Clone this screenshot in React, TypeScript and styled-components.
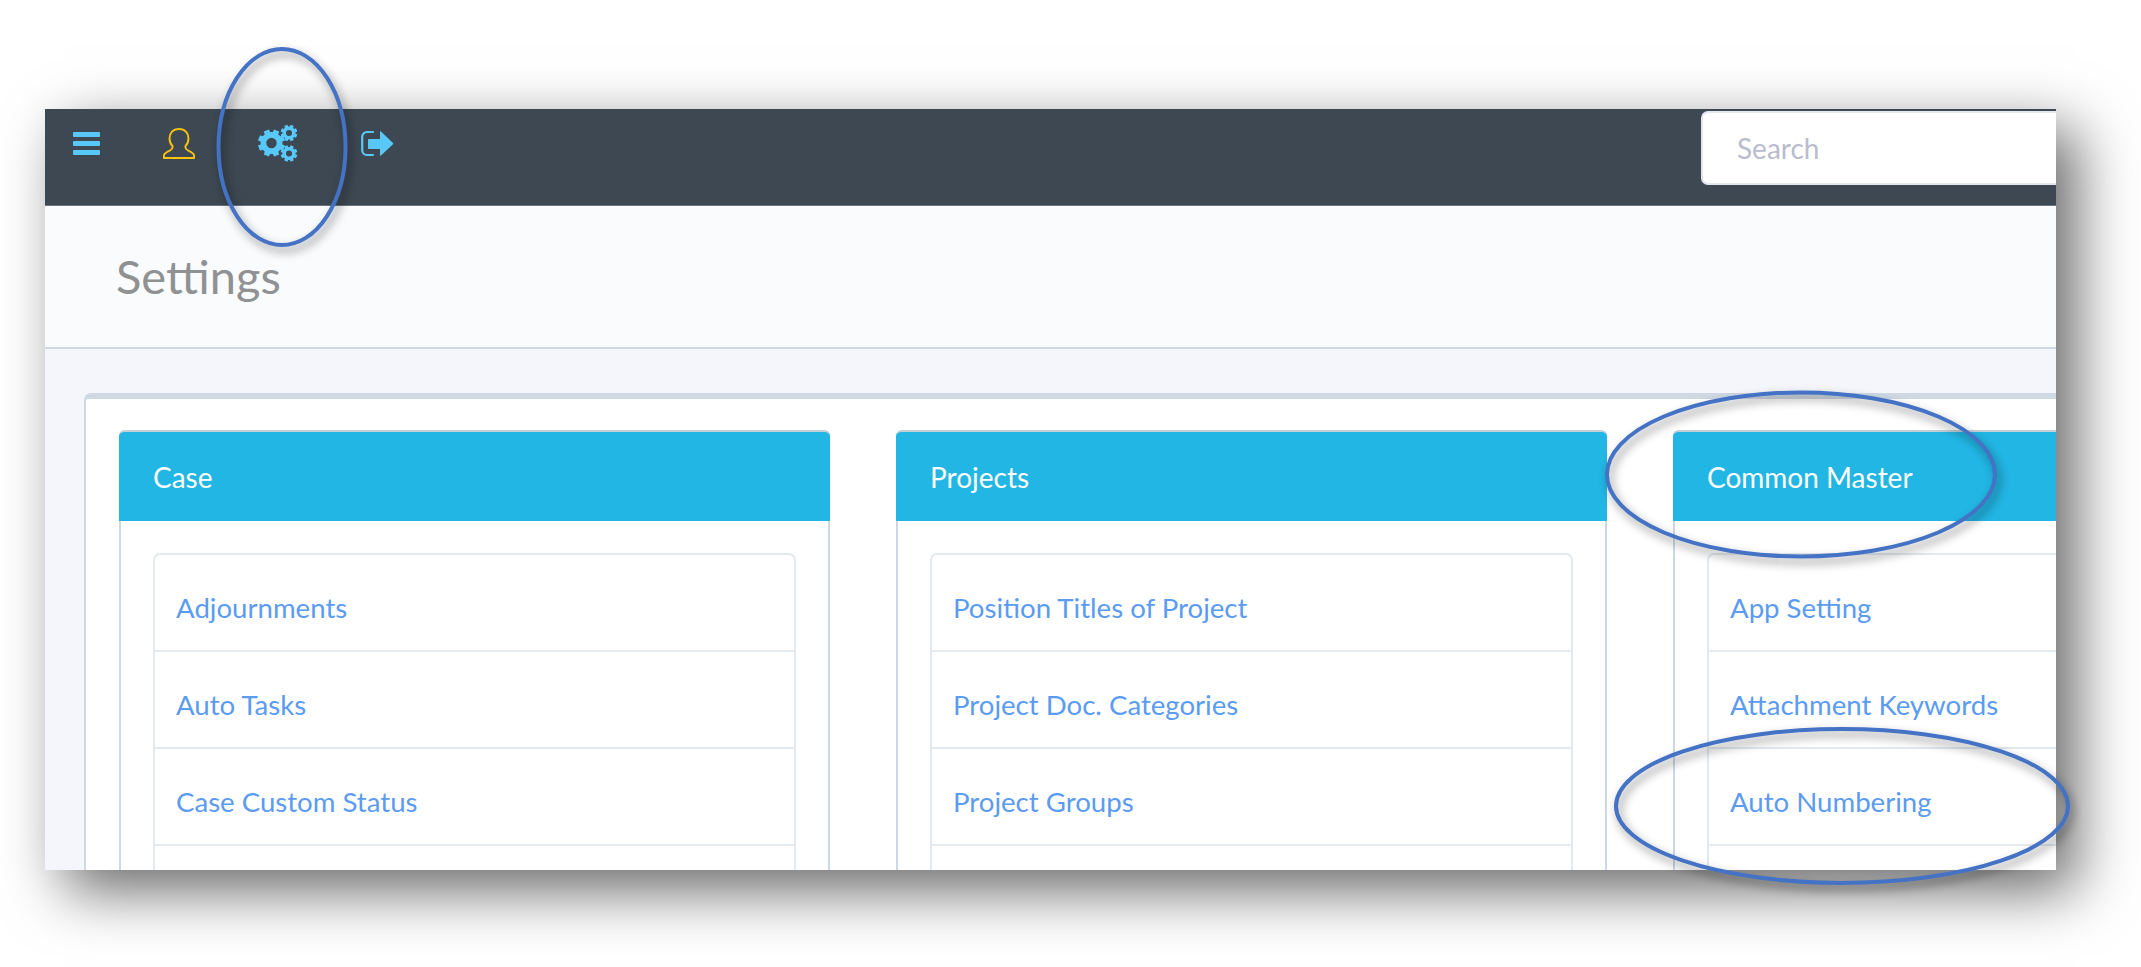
import React from "react";
import styled, { createGlobalStyle } from "styled-components";

const Global = createGlobalStyle`
  html, body { margin: 0; padding: 0; background: #fff; }
  body { font-family: "Lato", "Open Sans", sans-serif; width: 2141px; height: 967px; overflow: hidden; }
`;

const Stage = styled.div`
  position: relative;
  width: 2141px;
  height: 967px;
  padding: 109px 85px 97px 45px;
  box-sizing: border-box;
`;

const Window = styled.div`
  height: 761px;
  overflow: hidden;
  background: #f4f6fb;
  box-shadow: 20px 20px 56px rgba(0, 0, 0, 0.6);
`;

const TopBar = styled.header`
  display: flex;
  height: 96px;
  background: #3d4852;
  border-bottom: 1px solid #6b747c;
  box-sizing: content-box;
`;

const Nav = styled.nav`
  flex: 0 0 1656px;
  display: flex;
  align-items: center;
  gap: 63px;
  height: 68px;
  padding-left: 28px;
  box-sizing: border-box;
  color: #58c8f8;
`;

const NavIcon = styled.span`
  display: flex;
  align-items: center;
  justify-content: center;
  line-height: 0;
`;

const SearchInput = styled.input`
  flex: 0 0 420px;
  height: 74px;
  margin-top: 2px;
  padding: 0 0 0 34px;
  box-sizing: border-box;
  border: 2px solid #e2e8ee;
  border-radius: 7px;
  background: #fff;
  font: 28px "Lato", sans-serif;
  outline: none;
  &::placeholder { color: #b9bccf; opacity: 1; }
`;

const TitleBar = styled.div`
  height: 143px;
  padding-left: 71px;
  background: #fafbfd;
  border-bottom: 2px solid #ced9e1;
  display: flex;
  align-items: center;
  box-sizing: border-box;
`;

const PageTitle = styled.h1`
  margin: 0;
  font-size: 47px;
  line-height: 1;
  font-weight: 400;
  color: #8f9192;
`;

const Content = styled.main`
  padding: 44px 0 0 39px;
  box-sizing: border-box;
`;

const Board = styled.section`
  display: grid;
  grid-template-columns: 711px 711px 712px;
  column-gap: 66px;
  width: 2200px;
  padding: 31px 0 0 33px;
  background: #fff;
  border-top: 6px solid #ced9e3;
  border-left: 2px solid #ced9e3;
  border-top-left-radius: 7px;
  box-sizing: border-box;
`;

const Card = styled.article`
  border: 2px solid #cbd9e6;
  border-top: 0;
  border-radius: 6px 6px 0 0;
  box-sizing: border-box;
  background: #fff;
`;

const CardHead = styled.h2`
  margin: 0 -2px;
  height: 91px;
  padding-left: 34px;
  display: flex;
  align-items: center;
  background: #22b6e4;
  border-top: 2px solid #c6cfd6;
  border-radius: 6px 6px 0 0;
  box-sizing: border-box;
  color: #fff;
  font-size: 28px;
  font-weight: 400;
`;

const List = styled.ul`
  list-style: none;
  margin: 32px 32px 0 32px;
  padding: 0;
  border: 2px solid #e3e9ee;
  border-radius: 7px 7px 0 0;
  background: #fff;
`;

const Row = styled.li`
  height: 97px;
  padding: 10px 0 0 21px;
  display: flex;
  align-items: center;
  box-sizing: border-box;
  border-bottom: 2px solid #e3e9ee;
  &:last-child { border-bottom: 0; }
`;

const RowLink = styled.a`
  color: #5b9bf2;
  font-size: 27.6px;
  text-decoration: none;
`;

const Notes = styled.svg`
  position: absolute;
  inset: 0;
  width: 2141px;
  height: 967px;
  pointer-events: none;
  overflow: visible;
`;

const Note = styled.ellipse`
  fill: none;
  stroke: #4472c4;
  stroke-width: 4;
  filter: drop-shadow(3px 5px 5px rgba(0, 0, 0, 0.45));
`;

const columns = [
  { title: "Case", rows: ["Adjournments", "Auto Tasks", "Case Custom Status"] },
  { title: "Projects", rows: ["Position Titles of Project", "Project Doc. Categories", "Project Groups"] },
  { title: "Common Master", rows: ["App Setting", "Attachment Keywords", "Auto Numbering"] },
];

const gearPath = (cx: number, cy: number, outer: number, root: number, hole: number, teeth: number) => {
  const step = (Math.PI * 2) / teeth;
  const pt = (r: number, a: number) => `${(cx + r * Math.cos(a)).toFixed(2)} ${(cy + r * Math.sin(a)).toFixed(2)}`;
  let d = "";
  for (let i = 0; i < teeth; i++) {
    const a = i * step + step / 2;
    const w = step * 0.26;
    const b = step * 0.34;
    d += `${i === 0 ? "M" : "L"}${pt(root, a - b)} L${pt(outer, a - w)} L${pt(outer, a + w)} L${pt(root, a + b)} `;
  }
  d += "Z ";
  d += `M${cx - hole} ${cy} a${hole} ${hole} 0 1 0 ${hole * 2} 0 a${hole} ${hole} 0 1 0 ${-hole * 2} 0 Z`;
  return d;
};

const Hamburger = () => (
  <svg width="27" height="23" viewBox="0 0 27 23" fill="currentColor">
    <rect y="0" width="27" height="5" rx="1" />
    <rect y="9" width="27" height="5" rx="1" />
    <rect y="18" width="27" height="5" rx="1" />
  </svg>
);

const UserIcon = () => (
  <svg width="32" height="31" viewBox="0 0 32 31" fill="none" stroke="#fcc30b" strokeWidth="1.9" strokeLinejoin="round">
    <path d="M16 1C10 1 6.500 5 6.500 10.500C6.500 14 8 16.500 9.500 18C10 20 9 21.500 7 22.500C4 24 1.500 25 .8 27.500V30H31.200V27.500C30.500 25 28 24 25 22.500C23 21.500 22 20 22.500 18C24 16.500 25.500 14 25.500 10.500C25.500 5 22 1 16 1Z" />
  </svg>
);

const GearsIcon = () => (
  <svg width="40" height="37" viewBox="0 0 40 37" fill="currentColor" fillRule="evenodd">
    <path d={gearPath(13.500, 18, 13.800, 11, 5.200, 8)} />
    <path d={gearPath(31, 8, 8.500, 6.600, 3, 8)} />
    <path d={gearPath(31, 28.500, 8.500, 6.600, 3, 8)} />
  </svg>
);

const ExitIcon = () => (
  <svg width="33" height="27" viewBox="0 0 33 27" fill="currentColor">
    <path d="M12 2H6C3.200 2 1.200 4.200 1.200 7v13c0 2.800 2 5 4.800 5H12" fill="none" stroke="currentColor" strokeWidth="2.200" strokeLinecap="round" />
    <path d="M8 9h11V2c0-.6.6-.9 1-.5L32 13c.4.4.4.9 0 1.300L20 25.500c-.4.4-1 .1-1-.5V19H8c-.6 0-1-.4-1-1V10c0-.6.4-1 1-1z" />
  </svg>
);

export default function App() {
  return (
    <>
      <Global />
      <Stage>
        <Window>
          <TopBar>
            <Nav>
              <NavIcon><Hamburger /></NavIcon>
              <NavIcon><UserIcon /></NavIcon>
              <NavIcon><GearsIcon /></NavIcon>
              <NavIcon><ExitIcon /></NavIcon>
            </Nav>
            <SearchInput placeholder="Search" />
          </TopBar>
          <TitleBar><PageTitle>Settings</PageTitle></TitleBar>
          <Content>
            <Board>
              {columns.map((c) => (
                <Card key={c.title}>
                  <CardHead>{c.title}</CardHead>
                  <List>
                    {c.rows.map((r) => (
                      <Row key={r}><RowLink href="#">{r}</RowLink></Row>
                    ))}
                    <Row />
                  </List>
                </Card>
              ))}
            </Board>
          </Content>
        </Window>
        <Notes viewBox="0 0 2141 967">
          <Note cx="282" cy="147" rx="63.500" ry="98" />
          <Note cx="1801" cy="474.500" rx="194" ry="82" />
          <Note cx="1842" cy="806" rx="226" ry="77" />
        </Notes>
      </Stage>
    </>
  );
}
